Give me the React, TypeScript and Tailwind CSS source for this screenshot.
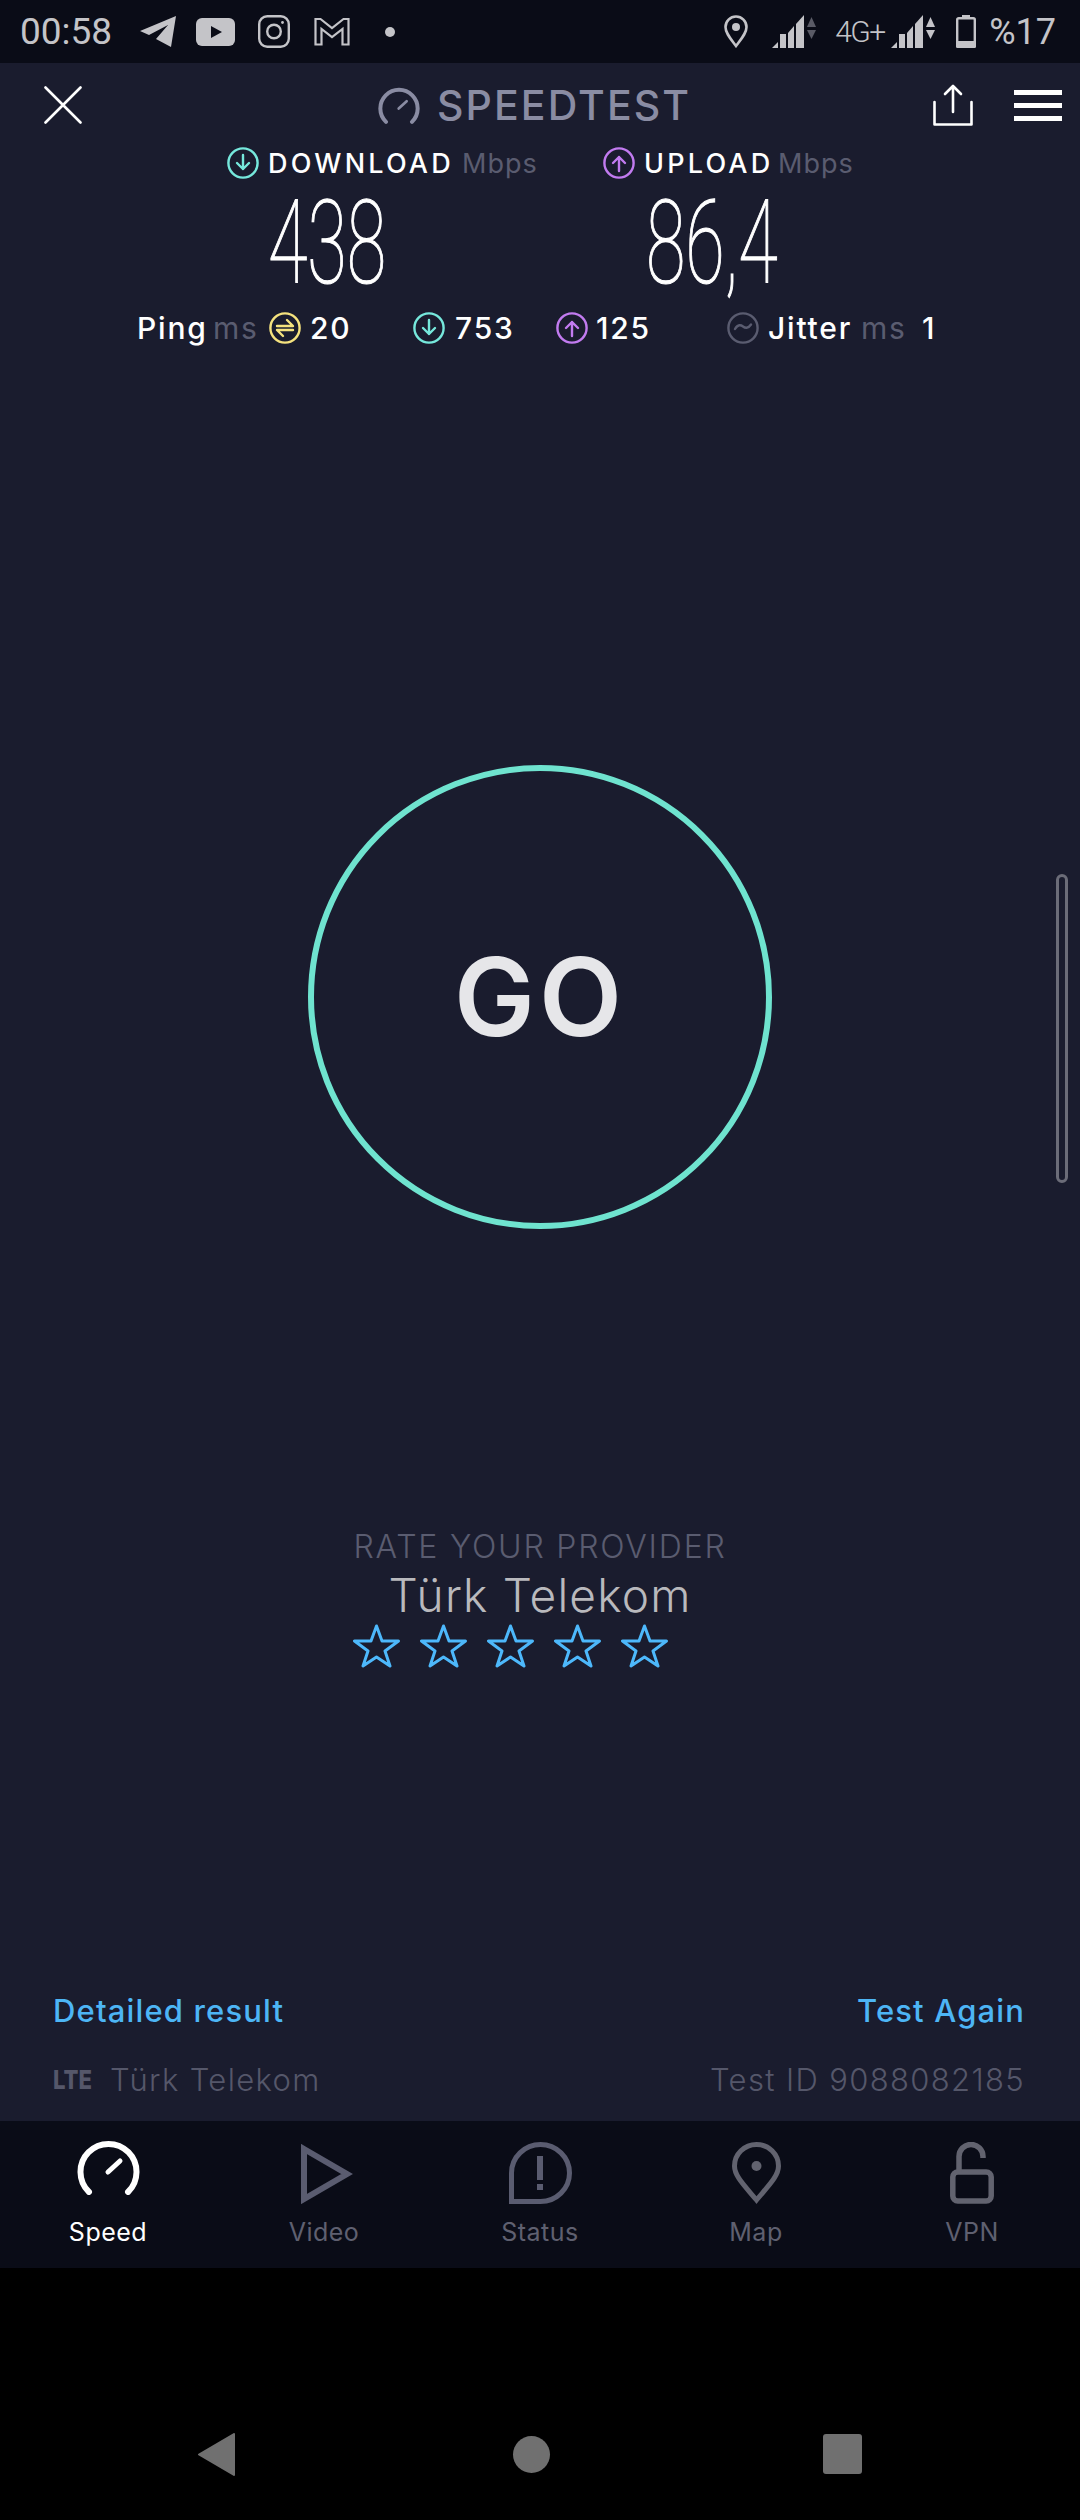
import React from "react";

const Gauge = ({ w, h, c, needle = 5 }: { w: number; h: number; c: string; needle?: number }) => (
  <svg width={w} height={h} viewBox="0 0 63 55" fill="none" stroke={c} strokeLinecap="round">
    <path d="M12 52A28 28 0 1 1 51 52" strokeWidth="6" />
    <path d="M31 32 43 21" strokeWidth={needle} />
  </svg>
);

const Circle = ({ c, children }: { c: string; children: React.ReactNode }) => (
  <svg width="32" height="32" viewBox="0 0 32 32" fill="none" stroke={c} strokeWidth="2.4" strokeLinecap="round" strokeLinejoin="round" className="shrink-0">
    <circle cx="16" cy="16" r="14.6" />
    {children}
  </svg>
);
const Down = ({ c }: { c: string }) => <Circle c={c}><path d="M16 8v14M10 16l6 6 6-6" /></Circle>;
const Up = ({ c }: { c: string }) => <Circle c={c}><path d="M16 24V10M10 16l6-6 6 6" /></Circle>;

const Signal = ({ dim }: { dim?: boolean }) => (
  <svg width="46" height="33" viewBox="0 0 46 33" fill="#c4c4c8">
    <polygon points="0,33 6,27 6,33" />
    <rect x="8" y="19" width="6" height="14" />
    <polygon points="16,18 22,11 22,33 16,33" />
    <polygon points="24,9 32,0 32,33 24,33" />
    <g fill={dim ? "#5a5b66" : "#c4c4c8"}>
      <polygon points="35,12 39.5,2 44,12" />
      <polygon points="35,15 44,15 39.5,24" />
    </g>
  </svg>
);

const Star = () => (
  <svg width="47" height="44" viewBox="0 0 47 44" fill="none" stroke="#4db8fb" strokeWidth="3" strokeLinejoin="round">
    <polygon points="23.5,2 29,17 45.5,17 32,27 37,42 23.5,33 10,42 15,27 1.5,17 18,17" />
  </svg>
);

const NavItem = ({ icon, label, active }: { icon: React.ReactNode; label: string; active?: boolean }) => (
  <div className="flex flex-col items-center">
    <div className="flex h-[75px] items-end">{icon}</div>
    <span className={`mt-[6px] text-[25px] leading-[36px] tracking-[0.5px] ${active ? "text-white" : "text-[#5f6070]"}`}>{label}</span>
  </div>
);

export default function App() {
  return (
    <div className="flex h-[2520px] w-[1080px] flex-col overflow-hidden bg-black font-['Inter',sans-serif]">
      {/* status bar */}
      <div className="flex h-[63px] shrink-0 items-center bg-[#0a0c17] pl-[20px] pr-[24px] text-[#c4c4c8]">
        <span className="font-['Roboto',sans-serif] text-[37px] leading-none">00:58</span>
        <svg width="36" height="32" viewBox="0 0 36 32" fill="#c4c4c8" className="ml-[28px]">
          <polygon points="0,15 36,0 31,31 16,23 28,9 9,19" strokeLinejoin="round" />
        </svg>
        <svg width="39" height="28" viewBox="0 0 39 28" className="ml-[20px]">
          <rect width="39" height="28" rx="6" fill="#c4c4c8" />
          <polygon points="15,8 26,14 15,20" fill="#0a0c17" />
        </svg>
        <svg width="32" height="33" viewBox="0 0 32 33" fill="none" stroke="#c4c4c8" strokeWidth="2.4" className="ml-[23px]">
          <rect x="1.2" y="1.2" width="29.6" height="30.6" rx="8" />
          <circle cx="16" cy="16.5" r="6.8" />
          <circle cx="24.5" cy="7.5" r="1.4" fill="#c4c4c8" stroke="none" />
        </svg>
        <svg width="36" height="29" viewBox="0 0 36 29" fill="none" stroke="#c4c4c8" strokeWidth="2.2" className="ml-[24px]">
          <path d="M1.5 27.5V2h5L18 11 29.5 2h5v25.500h-6V12L18 20 7.500 12v15.500z" />
        </svg>
        <span className="ml-[35px] h-[10px] w-[10px] rounded-full bg-[#c4c4c8]" />
        <svg width="24" height="33" viewBox="0 0 24 33" fill="none" stroke="#c4c4c8" strokeWidth="2.6" className="ml-auto">
          <path d="M12 31C6 23 1.500 18 1.500 12a10.500 10.500 0 0 1 21 0c0 6-4.500 11-10.500 19z" />
          <circle cx="12" cy="12" r="4" fill="#c4c4c8" stroke="none" />
        </svg>
        <div className="ml-[24px]"><Signal dim /></div>
        <span className="ml-[17px] w-[50px] font-['Roboto',sans-serif] text-[30px] font-light leading-none tracking-[-1.500px]">4G+</span>
        <div className="ml-[6px]"><Signal /></div>
        <svg width="20" height="33" viewBox="0 0 20 33" className="ml-[19px]">
          <rect x="6" width="8" height="3" fill="#c4c4c8" />
          <rect x="1.200" y="3.200" width="17.600" height="28.600" rx="1.500" fill="none" stroke="#c4c4c8" strokeWidth="2.400" />
          <rect y="26" width="20" height="7" rx="1.500" fill="#c4c4c8" />
        </svg>
        <span className="ml-[13px] font-['Roboto',sans-serif] text-[36px] leading-none">%17</span>
      </div>

      {/* main */}
      <div className="relative flex h-[2058px] shrink-0 flex-col bg-[#1a1c2e]">
        {/* header */}
        <div className="flex h-[84px] shrink-0 items-center pl-[44px]">
          <svg width="38" height="38" viewBox="0 0 38 38" stroke="#fff" strokeWidth="2.600" strokeLinecap="round">
            <path d="M1.500 1.500l35 35M36.500 1.500l-35 35" />
          </svg>
          <div className="ml-[296px]"><Gauge w={42} h={37} c="#8a8ca3" needle={4} /></div>
          <span className="ml-[17px] w-[248px] whitespace-nowrap text-[41px] font-medium leading-none tracking-[2.100px] text-[#8a8ca3]">SPEEDTEST</span>
          <svg width="40" height="42" viewBox="0 0 40 42" fill="none" stroke="#fff" strokeWidth="2.600" strokeLinecap="round" strokeLinejoin="round" className="ml-[248px]">
            <path d="M20 28V2M12 10l8-8 8 8M1.500 18v22.500h37V18" />
          </svg>
          <div className="ml-[41px] flex w-[48px] flex-col gap-[8px]">
            <div className="h-[5px] bg-white" />
            <div className="h-[5px] bg-white" />
            <div className="h-[5px] bg-white" />
          </div>
        </div>

        {/* download / upload labels */}
        <div className="flex h-[32px] shrink-0 items-center whitespace-nowrap pl-[227px] text-[27px] leading-none">
          <Down c="#76e8dc" />
          <span className="ml-[9px] w-[185px] font-medium tracking-[3.200px] text-white">DOWNLOAD</span>
          <span className="ml-[9px] w-[75px] tracking-[1px] text-[#5a5c70]">Mbps</span>
          <div className="ml-[66px]"><Up c="#c27bf0" /></div>
          <span className="ml-[9px] w-[124px] font-medium tracking-[3.200px] text-white">UPLOAD</span>
          <span className="ml-[10px] w-[74px] tracking-[1px] text-[#5a5c70]">Mbps</span>
        </div>

        {/* big numbers */}
        <div className="flex h-[133px] shrink-0 items-center pb-[6px] pl-[268px] font-['Roboto',sans-serif] text-[116px] font-thin leading-none text-white">
          <span className="block w-[116px] origin-left scale-x-[0.62] whitespace-nowrap [-webkit-text-stroke:1.2px_#fff]">438</span>
          <span className="ml-[262px] block w-[133px] origin-left scale-x-[0.62] whitespace-nowrap [-webkit-text-stroke:1.2px_#fff]">86,4</span>
        </div>

        {/* stats */}
        <div className="flex h-[32px] shrink-0 items-center whitespace-nowrap pl-[137px] text-[30px] font-medium leading-none tracking-[1.800px] text-white">
          <span className="w-[69px]">Ping</span>
          <span className="ml-[7px] w-[44px] font-normal text-[#5a5c70]">ms</span>
          <div className="ml-[12px]">
            <Circle c="#f5e27e"><path d="M8 14h16l-6-6M24 18H8l6 6" /></Circle>
          </div>
          <span className="ml-[9px] w-[41px]">20</span>
          <div className="ml-[62px]"><Down c="#76e8dc" /></div>
          <span className="ml-[10px] w-[54px]">753</span>
          <div className="ml-[47px]"><Up c="#c27bf0" /></div>
          <span className="ml-[8px] w-[51px]">125</span>
          <div className="ml-[80px]">
            <Circle c="#5a5c70"><path d="M8 17c3-5 6-4 8-2.500s5 2.500 8-2" /></Circle>
          </div>
          <span className="ml-[9px] w-[83px]">Jitter</span>
          <span className="ml-[10px] w-[45px] font-normal text-[#5a5c70]">ms</span>
          <span className="ml-[16px]">1</span>
        </div>

        {/* go */}
        <div className="mx-auto mt-[421px] flex h-[464px] w-[464px] shrink-0 items-center justify-center rounded-full border-[6px] border-[#6fe3cf]">
          <span className="text-[108px] font-semibold leading-none tracking-[4px] text-[#e6e6e9]">GO</span>
        </div>

        {/* scroll indicator */}
        <div className="absolute left-[1056px] top-[811px] h-[309px] w-[12px] rounded-full border-[3px] border-[#6b6c78]" />

        {/* rate */}
        <div className="mt-[298px] flex shrink-0 flex-col items-center whitespace-nowrap">
          <span className="text-[32px] font-light leading-[40px] tracking-[1.800px] text-[#5a5c70]">RATE YOUR PROVIDER</span>
          <span className="mt-[1px] text-[46px] font-light leading-[54px] tracking-[1.200px] text-[#b9b9bd]">Türk Telekom</span>
        </div>
        <div className="ml-[353px] mt-[2px] flex shrink-0 gap-[20px]">
          <Star /><Star /><Star /><Star /><Star />
        </div>

        {/* bottom links */}
        <div className="mt-auto flex items-center justify-between pb-[29px] pl-[53px] pr-[55px] text-[31px] font-medium leading-[40px] tracking-[1.150px] text-[#4db5f5]">
          <span>Detailed result</span>
          <span>Test Again</span>
        </div>
        <div className="flex items-center justify-between pb-[21px] pl-[53px] pr-[55px] text-[31px] font-light leading-[40px] tracking-[1.350px] text-[#55576a]">
          <div className="flex items-center">
            <span className="w-[42px] origin-left scale-x-[0.85] text-[26px] font-extrabold tracking-normal">LTE</span>
            <span className="ml-[15px]">Türk Telekom</span>
          </div>
          <span>Test ID 9088082185</span>
        </div>
      </div>

      {/* nav */}
      <div className="grid h-[147px] shrink-0 grid-cols-5 bg-[#0a0c17] pt-[12px]">
        <NavItem active label="Speed" icon={<div className="mb-[13px]"><Gauge w={63} h={55} c="#fff" /></div>} />
        <NavItem label="Video" icon={
          <svg width="52" height="60" viewBox="0 0 52 60" fill="none" stroke="#5a5c70" strokeWidth="6" className="mb-[4px] ml-[6px]">
            <polygon points="3,5 46,30 3,55" />
          </svg>} />
        <NavItem label="Status" icon={
          <svg width="63" height="62" viewBox="0 0 63 62" fill="none" stroke="#5a5c70" strokeWidth="5" className="mb-[4px]">
            <path d="M2.500 59.500V31a29 28.500 0 1 1 29 28.500z" />
            <rect x="28" y="14" width="6" height="24" fill="#5a5c70" stroke="none" />
            <rect x="28" y="42" width="6" height="6" fill="#5a5c70" stroke="none" />
          </svg>} />
        <NavItem label="Map" icon={
          <svg width="49" height="62" viewBox="0 0 49 62" fill="none" stroke="#62636f" strokeWidth="5" className="mb-[4px]">
            <path d="M24.500 58C12 43 2.500 34 2.500 24a22 21.500 0 0 1 44 0c0 10-9.500 19-22 34z" />
            <circle cx="24.500" cy="24" r="5" fill="#62636f" stroke="none" />
          </svg>} />
        <NavItem label="VPN" icon={
          <svg width="44" height="62" viewBox="0 0 44 62" fill="none" stroke="#62636f" strokeWidth="5.500" className="mb-[4px]">
            <rect x="2.800" y="30" width="38.400" height="29" rx="5" />
            <path d="M9 30V14.500a12 12 0 0 1 24 0v1.500" />
          </svg>} />
      </div>

      {/* android nav */}
      <div className="flex flex-1 items-center pl-[198px] pt-[120px]">
        <svg width="37" height="43" viewBox="0 0 37 43" fill="#707070" stroke="#707070" strokeWidth="2" strokeLinejoin="round">
          <polygon points="1,21.500 36,1 36,42" />
        </svg>
        <span className="ml-[278px] h-[37px] w-[37px] rounded-full bg-[#707070]" />
        <span className="ml-[273px] h-[40px] w-[39px] rounded-[3px] bg-[#707070]" />
      </div>
    </div>
  );
}
